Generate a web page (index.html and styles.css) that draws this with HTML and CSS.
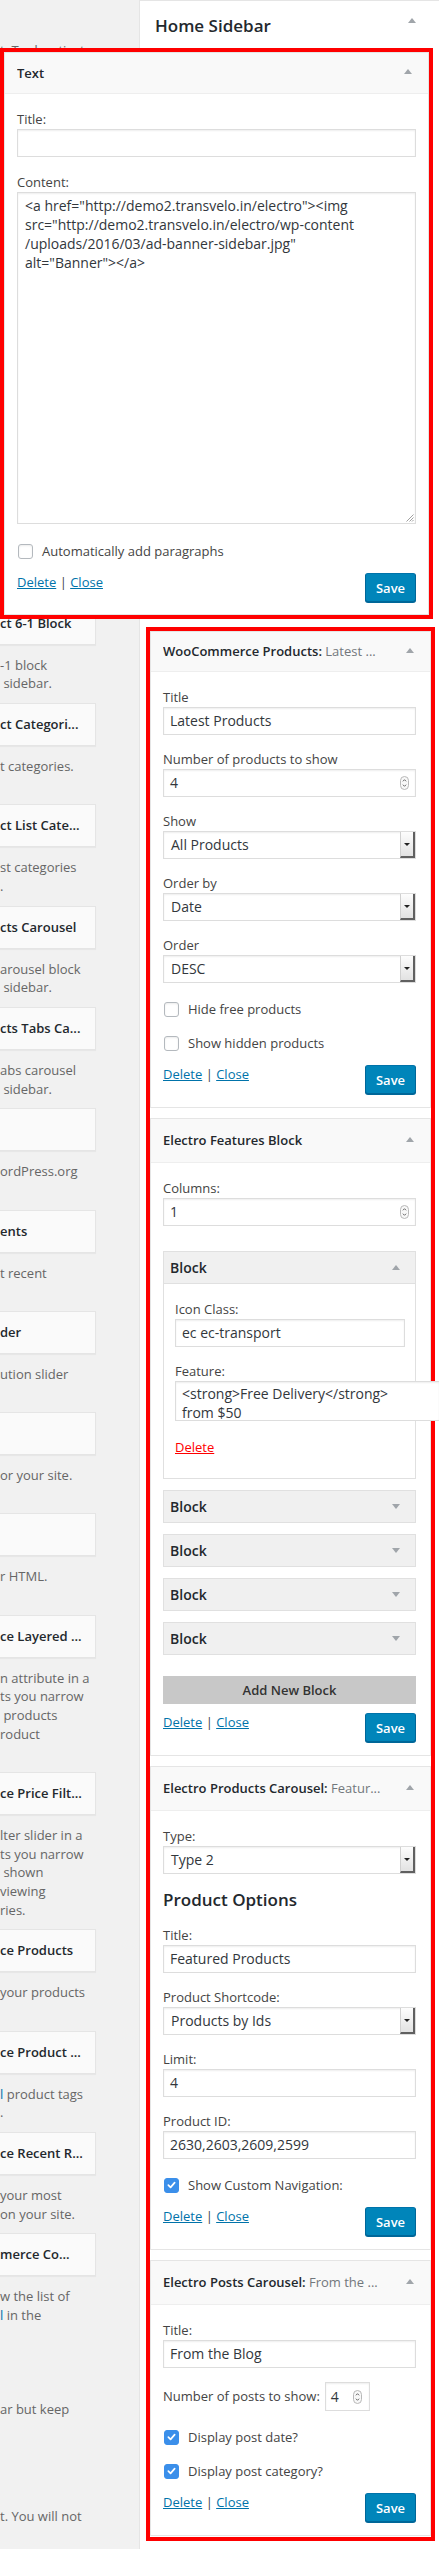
FILE: index.html
```html
<!DOCTYPE html>
<html lang="en">
<head>
<meta charset="utf-8">
<title>Widgets</title>
<link rel="stylesheet" href="styles.css">
</head>
<body>
<div class="page">
  <aside class="avail">
    <p class="intro">t. To deactivate</p>
    <div class="aw-list">
      <div class="aw"><div class="aw-card">ct 6-1 Block</div><p class="aw-desc">-1 block<br>&nbsp;sidebar.</p></div>
      <div class="aw"><div class="aw-card">ct Categori...</div><p class="aw-desc">t categories.<br>&nbsp;</p></div>
      <div class="aw"><div class="aw-card">ct List Cate...</div><p class="aw-desc">st categories<br>.</p></div>
      <div class="aw"><div class="aw-card">cts Carousel</div><p class="aw-desc">arousel block<br>&nbsp;sidebar.</p></div>
      <div class="aw"><div class="aw-card">cts Tabs Ca...</div><p class="aw-desc">abs carousel<br>&nbsp;sidebar.</p></div>
      <div class="aw"><div class="aw-card">&nbsp;</div><p class="aw-desc">ordPress.org<br>&nbsp;</p></div>
      <div class="aw"><div class="aw-card">ents</div><p class="aw-desc">t recent<br>&nbsp;</p></div>
      <div class="aw"><div class="aw-card">der</div><p class="aw-desc">ution slider<br>&nbsp;</p></div>
      <div class="aw"><div class="aw-card">&nbsp;</div><p class="aw-desc">or your site.<br>&nbsp;</p></div>
      <div class="aw"><div class="aw-card">&nbsp;</div><p class="aw-desc">r HTML.<br>&nbsp;</p></div>
      <div class="aw"><div class="aw-card">ce Layered ...</div><p class="aw-desc">n attribute in a<br>ts you narrow<br>&nbsp;products<br>roduct<br>&nbsp;</p></div>
      <div class="aw"><div class="aw-card">ce Price Filt...</div><p class="aw-desc">lter slider in a<br>ts you narrow<br>&nbsp;shown<br>viewing<br>ries.</p></div>
      <div class="aw"><div class="aw-card">ce Products</div><p class="aw-desc">your products<br>&nbsp;</p></div>
      <div class="aw"><div class="aw-card">ce Product ...</div><p class="aw-desc"><span class="blue">l</span> product tags<br>.</p></div>
      <div class="aw"><div class="aw-card">ce Recent R...</div><p class="aw-desc">your most<br>on your site.</p></div>
      <div class="aw"><div class="aw-card">merce Co...</div><p class="aw-desc">w the list of<br><span class="blue">l</span> in the</p></div>
    </div>
    <p class="inactive">ar but keep</p>
    <p class="inactive inactive-2">t. You will not</p>
  </aside>

  <main class="sidebar">
    <div class="sb-head"><h2>Home Sidebar</h2><span class="tri-up"></span></div>

    <div class="hl hl-text">
      <div class="widget">
        <div class="wtop h41"><h3>Text</h3><span class="tri-up"></span></div>
        <div class="wbody">
          <div class="field"><label class="lab">Title:</label><div class="input"></div></div>
          <div class="field"><label class="lab">Content:</label>
            <div class="textarea big">&lt;a href="http://demo2.transvelo.in/electro"&gt;&lt;img<br>src="http://demo2.transvelo.in/electro/wp-content<br>/uploads/2016/03/ad-banner-sidebar.jpg"<br>alt="Banner"&gt;&lt;/a&gt;<svg class="grip" width="10" height="10" viewBox="0 0 10 10"><path d="M9.5 2.5 L2.5 9.5 M9.5 5.5 L5.5 9.5 M9.5 8 L8 9.5" stroke="#a0a0a0" stroke-width="1" fill="none"/></svg></div>
          </div>
          <div class="check"><span class="cb"></span><span>Automatically add paragraphs</span></div>
          <div class="wfoot"><div class="links"><a href="#">Delete</a> | <a href="#">Close</a></div><button class="save">Save</button></div>
        </div>
      </div>
    </div>

    <div class="hl hl-list">
      <div class="widget">
        <div class="wtop h40"><h3>WooCommerce Products:<span class="sub"> Latest ...</span></h3><span class="tri-up"></span></div>
        <div class="wbody">
          <div class="field"><label class="lab">Title</label><div class="input">Latest Products</div></div>
          <div class="field"><label class="lab">Number of products to show</label><div class="input num">4<svg class="spin" width="9" height="14" viewBox="0 0 9 14"><rect x="0.5" y="0.5" width="8" height="13" rx="4" fill="#f8f8f8" stroke="#b8b8b8"/><path d="M2.9 5.3 L4.5 3.7 L6.1 5.3 M2.9 8.7 L4.5 10.3 L6.1 8.7" fill="none" stroke="#555" stroke-width="0.9"/></svg></div></div>
          <div class="field"><label class="lab">Show</label><div class="select"><span class="val">All Products</span><span class="btn"></span></div></div>
          <div class="field"><label class="lab">Order by</label><div class="select"><span class="val">Date</span><span class="btn"></span></div></div>
          <div class="field"><label class="lab">Order</label><div class="select"><span class="val">DESC</span><span class="btn"></span></div></div>
          <div class="check"><span class="cb"></span><span>Hide free products</span></div>
          <div class="check"><span class="cb"></span><span>Show hidden products</span></div>
          <div class="wfoot"><div class="links"><a href="#">Delete</a> | <a href="#">Close</a></div><button class="save">Save</button></div>
        </div>
      </div>

      <div class="widget">
        <div class="wtop"><h3>Electro Features Block</h3><span class="tri-up"></span></div>
        <div class="wbody">
          <div class="field"><label class="lab">Columns:</label><div class="input num">1<svg class="spin" width="9" height="14" viewBox="0 0 9 14"><rect x="0.5" y="0.5" width="8" height="13" rx="4" fill="#f8f8f8" stroke="#b8b8b8"/><path d="M2.9 5.3 L4.5 3.7 L6.1 5.3 M2.9 8.7 L4.5 10.3 L6.1 8.7" fill="none" stroke="#555" stroke-width="0.9"/></svg></div></div>
          <div class="blocks">
            <div class="blk open">
              <div class="blk-head"><span>Block</span><span class="tri-up"></span></div>
              <div class="blk-body">
                <div class="field"><label class="lab">Icon Class:</label><div class="input">ec ec-transport</div></div>
                <div class="field"><label class="lab">Feature:</label>
                  <div class="textarea feat">&lt;strong&gt;Free Delivery&lt;/strong&gt;<br>from $50</div>
                </div>
                <a href="#" class="del-red">Delete</a>
              </div>
            </div>
            <div class="blk"><div class="blk-head"><span>Block</span><span class="tri-down"></span></div></div>
            <div class="blk"><div class="blk-head"><span>Block</span><span class="tri-down"></span></div></div>
            <div class="blk"><div class="blk-head"><span>Block</span><span class="tri-down"></span></div></div>
            <div class="blk"><div class="blk-head"><span>Block</span><span class="tri-down"></span></div></div>
          </div>
          <div class="addblock">Add New Block</div>
          <div class="wfoot tight"><div class="links"><a href="#">Delete</a> | <a href="#">Close</a></div><button class="save">Save</button></div>
        </div>
      </div>

      <div class="widget">
        <div class="wtop"><h3>Electro Products Carousel:<span class="sub"> Featur...</span></h3><span class="tri-up"></span></div>
        <div class="wbody">
          <div class="field"><label class="lab">Type:</label><div class="select"><span class="val">Type 2</span><span class="btn"></span></div></div>
          <h4 class="opts">Product Options</h4>
          <div class="field after-h"><label class="lab">Title:</label><div class="input">Featured Products</div></div>
          <div class="field"><label class="lab">Product Shortcode:</label><div class="select"><span class="val">Products by Ids</span><span class="btn"></span></div></div>
          <div class="field"><label class="lab">Limit:</label><div class="input">4</div></div>
          <div class="field"><label class="lab">Product ID:</label><div class="input">2630,2603,2609,2599</div></div>
          <div class="check"><span class="cb on"><svg width="14" height="14" viewBox="0 0 14 14"><path d="M3.6 7.2 L6 9.6 L10.4 4.4" fill="none" stroke="#fff" stroke-width="1.8" stroke-linecap="round" stroke-linejoin="round"/></svg></span><span>Show Custom Navigation:</span></div>
          <div class="wfoot"><div class="links"><a href="#">Delete</a> | <a href="#">Close</a></div><button class="save">Save</button></div>
        </div>
      </div>

      <div class="widget">
        <div class="wtop"><h3>Electro Posts Carousel:<span class="sub"> From the ...</span></h3><span class="tri-up"></span></div>
        <div class="wbody">
          <div class="field"><label class="lab">Title:</label><div class="input">From the Blog</div></div>
          <div class="numrow"><span>Number of posts to show:</span><div class="input num small">4<svg class="spin" width="9" height="14" viewBox="0 0 9 14"><rect x="0.5" y="0.5" width="8" height="13" rx="4" fill="#f8f8f8" stroke="#b8b8b8"/><path d="M2.9 5.3 L4.5 3.7 L6.1 5.3 M2.9 8.7 L4.5 10.3 L6.1 8.7" fill="none" stroke="#555" stroke-width="0.9"/></svg></div></div>
          <div class="check"><span class="cb on"><svg width="14" height="14" viewBox="0 0 14 14"><path d="M3.6 7.2 L6 9.6 L10.4 4.4" fill="none" stroke="#fff" stroke-width="1.8" stroke-linecap="round" stroke-linejoin="round"/></svg></span><span>Display post date?</span></div>
          <div class="check"><span class="cb on"><svg width="14" height="14" viewBox="0 0 14 14"><path d="M3.6 7.2 L6 9.6 L10.4 4.4" fill="none" stroke="#fff" stroke-width="1.8" stroke-linecap="round" stroke-linejoin="round"/></svg></span><span>Display post category?</span></div>
          <div class="wfoot"><div class="links"><a href="#">Delete</a> | <a href="#">Close</a></div><button class="save">Save</button></div>
        </div>
      </div>
    </div>
  </main>
</div>
</body>
</html>
```

FILE: styles.css
```css
* { box-sizing: border-box; }
html, body { margin: 0; padding: 0; }
body {
  background: #f1f1f1;
  font-family: "Open Sans", "Liberation Sans", Arial, sans-serif;
  font-size: 13px;
  line-height: 1.4;
  color: #444;
  overflow: hidden;
}
.page { display: flex; width: 439px; height: 2549px; overflow: hidden; }

/* available widgets column (left, clipped) */
.avail { flex: 0 0 139px; overflow: hidden; padding-top: 41px; }
.intro { margin: 0; line-height: 18.65px; color: #666; white-space: nowrap; }
.aw-list { margin-top: 542px; }
.aw { margin-bottom: 10px; }
.aw-card {
  margin-left: -10px; width: 106px; height: 43px;
  background: #fafafa; border: 1px solid #e5e5e5;
  box-shadow: 0 1px 1px rgba(0,0,0,.04);
  padding-left: 9px; line-height: 41px;
  font-weight: 600; color: #23282d; white-space: nowrap; overflow: hidden;
}
.aw-desc { margin: 11px 0 0; line-height: 18.65px; color: #666; white-space: nowrap; }
.blue { color: #0073aa; }
.inactive { margin: 75px 0 0; line-height: 18.65px; color: #666; white-space: nowrap; }
.inactive-2 { margin-top: 89px; }

/* sidebar (right) */
.sidebar { flex: 0 0 300px; background: #fff; border-top: 1px solid #e5e5e5; border-left: 1px solid #e5e5e5; }
.sb-head { height: 47px; display: flex; justify-content: space-between; align-items: flex-start; padding-left: 15px; }
.sb-head h2 { margin: 0; padding-top: 13px; font-size: 17px; line-height: 24px; font-weight: 600; color: #23282d; }
.sb-head .tri-up { margin: 17px 23px 0 0; }

.tri-up { width: 0; height: 0; border-left: 4px solid transparent; border-right: 4px solid transparent; border-bottom: 5px solid #a0a5aa; }
.tri-down { width: 0; height: 0; border-left: 4px solid transparent; border-right: 4px solid transparent; border-top: 5px solid #a0a5aa; }

/* red highlight frames */
.hl { border: 4px solid #f00; }
.hl-text { width: 433px; margin-left: -140px; }
.hl-list { width: 289px; margin: 8px 0 0 6px; padding-bottom: 1px; }

/* widgets */
.widget { background: #fff; border: 1px solid #e5e5e5; }
.widget + .widget { margin-top: 10px; }
.wtop {
  display: flex; align-items: center; height: 44px;
  padding: 0 16px 0 12px; background: #f9f9f9; border-bottom: 1px solid #eee;
}
.wtop.h41 { height: 41px; }
.wtop.h40 { height: 40px; }
.wtop h3 { margin: 0; flex: 1; font-size: 13px; font-weight: 600; color: #23282d; white-space: nowrap; overflow: hidden; }
.wtop .sub { font-weight: 400; color: #72777c; }
.wtop .tri-up { margin-top: -3px; }

.wbody { padding: 15px 14px 13px 12px; }
.hl-text .wbody { padding: 15px 12px 12px; }
.lab { display: block; line-height: 20px; }
.field { margin-top: 14px; }
.field:first-child { margin-top: 0; }
.hl-text .field { margin-top: 15px; }
.hl-text .field:first-child { margin-top: 0; }

.input {
  position: relative; display: block; height: 28px;
  border: 1px solid #ddd; box-shadow: inset 0 1px 2px rgba(0,0,0,.07);
  background: #fff; padding: 0 6px;
  font-size: 14px; line-height: 26px; color: #32373c; white-space: nowrap;
}
.num { display: flex; justify-content: space-between; align-items: center; padding-right: 6px; }
.spin { display: block; }

.select {
  display: flex; height: 28px; border: 1px solid #ddd;
  box-shadow: inset 0 1px 2px rgba(0,0,0,.07); background: #fff;
}
.select .val { flex: 1; padding-left: 7px; font-size: 14px; line-height: 26px; color: #32373c; }
.select .btn {
  position: relative; width: 15px; height: 26px;
  background: linear-gradient(#fdfdfd, #e2e2e2);
  border-left: 1px solid #d0d0d0; border-right: 2px solid #606060; border-bottom: 2px solid #606060;
}
.select .btn::after {
  content: ""; position: absolute; left: 3px; top: 11px;
  border-left: 3px solid transparent; border-right: 3px solid transparent; border-top: 3px solid #222;
}

.textarea {
  position: relative; border: 1px solid #ddd; box-shadow: inset 0 1px 2px rgba(0,0,0,.07);
  background: #fff; font-size: 14px; color: #32373c; white-space: nowrap;
}
.textarea.big { height: 332px; padding: 3px 7px; line-height: 19px; }
.textarea.feat { width: 265px; height: 40px; padding: 3px 6px; line-height: 18.5px; overflow: hidden; }
.grip { position: absolute; right: 1px; bottom: 1px; }

.check { display: flex; align-items: center; height: 20px; margin-top: 16px; }
.check + .check { margin-top: 14px; }
.hl-text .check { margin-top: 17px; }
.cb {
  flex: none; display: flex; align-items: center; justify-content: center;
  width: 15px; height: 15px; margin: 0 9px 0 1px;
  border: 1px solid #b4b9be; border-radius: 3px; background: #fff;
  box-shadow: inset 0 1px 2px rgba(0,0,0,.08);
}
.cb.on { background: #3b8fea; border-color: #3b8fea; box-shadow: none; }

.wfoot { display: flex; justify-content: space-between; align-items: flex-start; margin-top: 12px; }
.wfoot.tight { margin-top: 9px; }
.links { line-height: 18px; color: #444; }
.links a { color: #0073aa; }
.save {
  width: 51px; height: 29px; padding: 0;
  background: #0085ba; border: 1px solid #0073aa; border-color: #0073aa #006799 #006799;
  border-radius: 3px; box-shadow: 0 1px 0 #006799;
  color: #fff; font-family: inherit; font-size: 13px; font-weight: 600;
}

/* feature blocks */
.blocks { margin-top: 25px; }
.blk { border: 1px solid #e0e0e0; background: #f0f0f0; }
.blk + .blk { margin-top: 11px; }
.blk-head {
  display: flex; align-items: center; justify-content: space-between;
  height: 31px; padding: 0 15px 0 6px;
  font-size: 14px; font-weight: 600; color: #23282d;
}
.blk.open .blk-head { height: 32px; border-bottom: 1px solid #e0e0e0; }
.blk-body { background: #fff; padding: 15px 10px 22px 11px; }
.del-red { display: block; margin-top: 17px; line-height: 18px; color: #f00; text-decoration: underline; width: max-content; }

.addblock {
  margin-top: 21px; height: 28px; background: #c8c8c8;
  text-align: center; line-height: 28px; font-weight: 600; color: #333;
}

.opts { margin: 14px 0 0; font-size: 17px; line-height: 24px; font-weight: 600; color: #23282d; }
.field.after-h { margin-top: 13px; }

.numrow { display: flex; align-items: center; height: 29px; margin-top: 14px; }
.input.small { width: 45px; height: 29px; margin-left: 5px; padding: 0 7px 0 5px; line-height: 27px; }
```
